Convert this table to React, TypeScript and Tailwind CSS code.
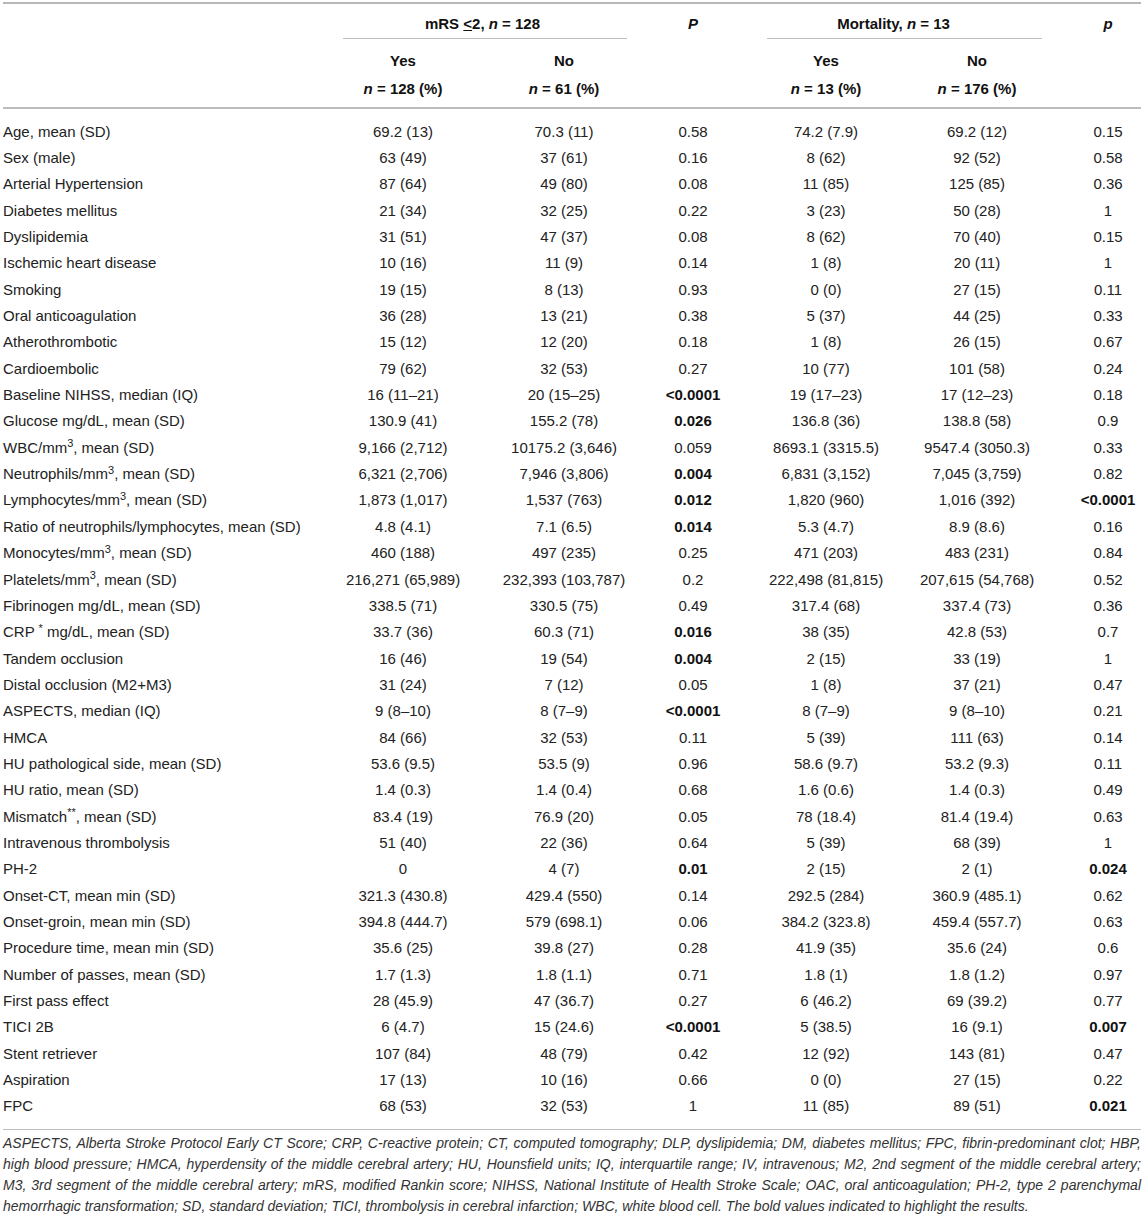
import React from "react";

type Row = string[];

const rows: Row[] = [
  ["Age, mean (SD)", "69.2 (13)", "70.3 (11)", "0.58", "74.2 (7.9)", "69.2 (12)", "0.15"],
  ["Sex (male)", "63 (49)", "37 (61)", "0.16", "8 (62)", "92 (52)", "0.58"],
  ["Arterial Hypertension", "87 (64)", "49 (80)", "0.08", "11 (85)", "125 (85)", "0.36"],
  ["Diabetes mellitus", "21 (34)", "32 (25)", "0.22", "3 (23)", "50 (28)", "1"],
  ["Dyslipidemia", "31 (51)", "47 (37)", "0.08", "8 (62)", "70 (40)", "0.15"],
  ["Ischemic heart disease", "10 (16)", "11 (9)", "0.14", "1 (8)", "20 (11)", "1"],
  ["Smoking", "19 (15)", "8 (13)", "0.93", "0 (0)", "27 (15)", "0.11"],
  ["Oral anticoagulation", "36 (28)", "13 (21)", "0.38", "5 (37)", "44 (25)", "0.33"],
  ["Atherothrombotic", "15 (12)", "12 (20)", "0.18", "1 (8)", "26 (15)", "0.67"],
  ["Cardioembolic", "79 (62)", "32 (53)", "0.27", "10 (77)", "101 (58)", "0.24"],
  ["Baseline NIHSS, median (IQ)", "16 (11–21)", "20 (15–25)", "!<0.0001", "19 (17–23)", "17 (12–23)", "0.18"],
  ["Glucose mg/dL, mean (SD)", "130.9 (41)", "155.2 (78)", "!0.026", "136.8 (36)", "138.8 (58)", "0.9"],
  ["WBC/mm^3, mean (SD)", "9,166 (2,712)", "10175.2 (3,646)", "0.059", "8693.1 (3315.5)", "9547.4 (3050.3)", "0.33"],
  ["Neutrophils/mm^3, mean (SD)", "6,321 (2,706)", "7,946 (3,806)", "!0.004", "6,831 (3,152)", "7,045 (3,759)", "0.82"],
  ["Lymphocytes/mm^3, mean (SD)", "1,873 (1,017)", "1,537 (763)", "!0.012", "1,820 (960)", "1,016 (392)", "!<0.0001"],
  ["Ratio of neutrophils/lymphocytes, mean (SD)", "4.8 (4.1)", "7.1 (6.5)", "!0.014", "5.3 (4.7)", "8.9 (8.6)", "0.16"],
  ["Monocytes/mm^3, mean (SD)", "460 (188)", "497 (235)", "0.25", "471 (203)", "483 (231)", "0.84"],
  ["Platelets/mm^3, mean (SD)", "216,271 (65,989)", "232,393 (103,787)", "0.2", "222,498 (81,815)", "207,615 (54,768)", "0.52"],
  ["Fibrinogen mg/dL, mean (SD)", "338.5 (71)", "330.5 (75)", "0.49", "317.4 (68)", "337.4 (73)", "0.36"],
  ["CRP * mg/dL, mean (SD)", "33.7 (36)", "60.3 (71)", "!0.016", "38 (35)", "42.8 (53)", "0.7"],
  ["Tandem occlusion", "16 (46)", "19 (54)", "!0.004", "2 (15)", "33 (19)", "1"],
  ["Distal occlusion (M2+M3)", "31 (24)", "7 (12)", "0.05", "1 (8)", "37 (21)", "0.47"],
  ["ASPECTS, median (IQ)", "9 (8–10)", "8 (7–9)", "!<0.0001", "8 (7–9)", "9 (8–10)", "0.21"],
  ["HMCA", "84 (66)", "32 (53)", "0.11", "5 (39)", "111 (63)", "0.14"],
  ["HU pathological side, mean (SD)", "53.6 (9.5)", "53.5 (9)", "0.96", "58.6 (9.7)", "53.2 (9.3)", "0.11"],
  ["HU ratio, mean (SD)", "1.4 (0.3)", "1.4 (0.4)", "0.68", "1.6 (0.6)", "1.4 (0.3)", "0.49"],
  ["Mismatch**, mean (SD)", "83.4 (19)", "76.9 (20)", "0.05", "78 (18.4)", "81.4 (19.4)", "0.63"],
  ["Intravenous thrombolysis", "51 (40)", "22 (36)", "0.64", "5 (39)", "68 (39)", "1"],
  ["PH-2", "0", "4 (7)", "!0.01", "2 (15)", "2 (1)", "!0.024"],
  ["Onset-CT, mean min (SD)", "321.3 (430.8)", "429.4 (550)", "0.14", "292.5 (284)", "360.9 (485.1)", "0.62"],
  ["Onset-groin, mean min (SD)", "394.8 (444.7)", "579 (698.1)", "0.06", "384.2 (323.8)", "459.4 (557.7)", "0.63"],
  ["Procedure time, mean min (SD)", "35.6 (25)", "39.8 (27)", "0.28", "41.9 (35)", "35.6 (24)", "0.6"],
  ["Number of passes, mean (SD)", "1.7 (1.3)", "1.8 (1.1)", "0.71", "1.8 (1)", "1.8 (1.2)", "0.97"],
  ["First pass effect", "28 (45.9)", "47 (36.7)", "0.27", "6 (46.2)", "69 (39.2)", "0.77"],
  ["TICI 2B", "6 (4.7)", "15 (24.6)", "!<0.0001", "5 (38.5)", "16 (9.1)", "!0.007"],
  ["Stent retriever", "107 (84)", "48 (79)", "0.42", "12 (92)", "143 (81)", "0.47"],
  ["Aspiration", "17 (13)", "10 (16)", "0.66", "0 (0)", "27 (15)", "0.22"],
  ["FPC", "68 (53)", "32 (53)", "1", "11 (85)", "89 (51)", "!0.021"],
];

// centers (page x): 403, 564, 693, 826, 977, 1108
const cellCls = [
  "w-[100px]",
  "ml-[61px] w-[100px]",
  "ml-[29px] w-[100px]",
  "ml-[33px] w-[100px]",
  "ml-[51px] w-[100px]",
  "ml-[51px] w-[60px]",
];

function Label({ text }: { text: string }) {
  if (text.includes("^3")) {
    const [a, b] = text.split("^3");
    return (
      <>
        {a}
        <sup className="text-[11px]">3</sup>
        {b}
      </>
    );
  }
  if (text.startsWith("CRP *")) {
    return (
      <>
        CRP <sup className="text-[11px]">*</sup> mg/dL, mean (SD)
      </>
    );
  }
  if (text.startsWith("Mismatch**")) {
    return (
      <>
        Mismatch<sup className="text-[11px]">**</sup>, mean (SD)
      </>
    );
  }
  return <>{text}</>;
}

function Cell({ v, cls }: { v: string; cls: string }) {
  const bold = v.startsWith("!");
  const t = bold ? v.slice(1) : v;
  return (
    <div className={`${cls} shrink-0 flex justify-center whitespace-nowrap ${bold ? "font-bold text-[#111]" : ""}`}>
      {t}
    </div>
  );
}

function HeadCell({ cls, top, n }: { cls: string; top: string; n: string }) {
  return (
    <div className={`${cls} shrink-0 flex flex-col items-center gap-[10px] whitespace-nowrap`}>
      <span>{top}</span>
      <span>
        <i>n</i> = {n} (%)
      </span>
    </div>
  );
}

const footLines = [
  "ASPECTS, Alberta Stroke Protocol Early CT Score; CRP, C-reactive protein; CT, computed tomography; DLP, dyslipidemia; DM, diabetes mellitus; FPC, fibrin-predominant clot; HBP,",
  "high blood pressure; HMCA, hyperdensity of the middle cerebral artery; HU, Hounsfield units; IQ, interquartile range; IV, intravenous; M2, 2nd segment of the middle cerebral artery;",
  "M3, 3rd segment of the middle cerebral artery; mRS, modified Rankin score; NIHSS, National Institute of Health Stroke Scale; OAC, oral anticoagulation; PH-2, type 2 parenchymal",
];
const lastFoot =
  "hemorrhagic transformation; SD, standard deviation; TICI, thrombolysis in cerebral infarction; WBC, white blood cell. The bold values indicated to highlight the results.";

export default function App() {
  return (
    <div
      className="w-[1144px] h-[1216px] bg-white overflow-hidden text-[#222] text-[15px]"
      style={{ fontFamily: '"Liberation Sans", Arial, Helvetica, sans-serif' }}
    >
      <div className="mx-[3px] mt-[2px] w-[1138px]">
        {/* top rule */}
        <div className="h-[2px] bg-[#b8b8b8]" />
        {/* header row A */}
        <div className="flex pt-[11px] pb-[5px] leading-[18px] font-bold text-[#111]">
          <div className="ml-[340px] w-[284px] shrink-0 flex justify-center whitespace-nowrap pr-[5px]">
            mRS&nbsp;
            <span className="underline underline-offset-[1px]">&lt;</span>2,&nbsp;<i>n</i>&nbsp;=&nbsp;128
          </div>
          <div className="ml-[16px] w-[100px] shrink-0 flex justify-center">
            <i>P</i>
          </div>
          <div className="ml-[24px] w-[275px] shrink-0 flex justify-center whitespace-nowrap pr-[22px]">
            Mortality,&nbsp;<i>n</i>&nbsp;=&nbsp;13
          </div>
          <div className="ml-[36px] w-[60px] shrink-0 flex justify-center">
            <i>p</i>
          </div>
        </div>
        {/* span rules */}
        <div className="flex">
          <div className="ml-[340px] w-[284px] h-px bg-[#bdbdbd]" />
          <div className="ml-[140px] w-[275px] h-px bg-[#bdbdbd]" />
        </div>
        {/* header row B */}
        <div className="flex pt-[13px] pb-[9px] leading-[18px] font-bold text-[#111]">
          <div className="w-[350px] shrink-0" />
          <HeadCell cls={cellCls[0]} top="Yes" n="128" />
          <HeadCell cls={cellCls[1]} top="No" n="61" />
          <div className={`${cellCls[2]} shrink-0`} />
          <HeadCell cls={cellCls[3]} top="Yes" n="13" />
          <HeadCell cls={cellCls[4]} top="No" n="176" />
          <div className={`${cellCls[5]} shrink-0`} />
        </div>
        <div className="h-[1.5px] bg-[#bdbdbd]" />
        {/* body */}
        <div className="pt-[10px] pb-[9px]">
          {rows.map((r, i) => (
            <div key={i} className="flex items-center h-[26.35px] leading-[18px]">
              <div className="w-[350px] shrink-0 whitespace-nowrap">
                <Label text={r[0]} />
              </div>
              {r.slice(1).map((v, j) => (
                <Cell key={j} v={v} cls={cellCls[j]} />
              ))}
            </div>
          ))}
        </div>
        <div className="h-[1.5px] bg-[#bdbdbd]" />
        {/* footnote */}
        <div className="pt-[3px] italic text-[14px] leading-[21px] text-[#333]">
          {footLines.map((l, i) => (
            <div key={i} className="whitespace-nowrap text-justify [text-align-last:justify]">
              {l}
            </div>
          ))}
          <div className="whitespace-nowrap">{lastFoot}</div>
        </div>
      </div>
    </div>
  );
}
